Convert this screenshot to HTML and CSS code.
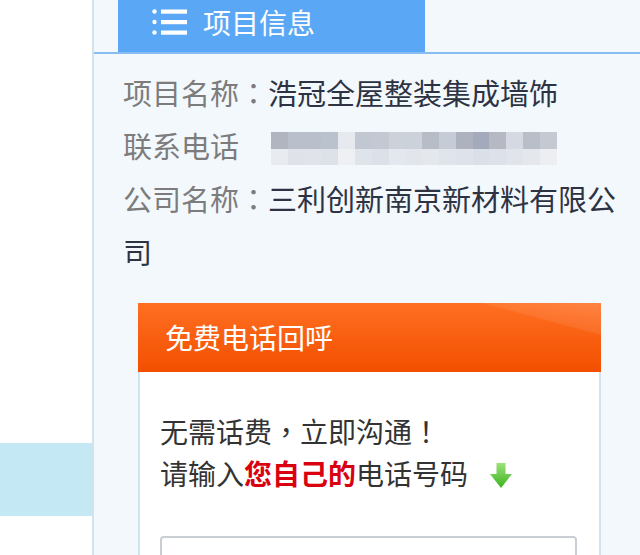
FILE: index.html
```html
<!DOCTYPE html>
<html lang="zh-CN">
<head>
  <meta charset="UTF-8">
  <title>项目信息</title>
  <link rel="stylesheet" href="styles.css">
</head>
<body>

  <div class="page">
    <div class="side">
      <div class="side-item"></div>
    </div>

    <div class="panel">
      <div class="tab-bar">
        <div class="tab">
          <svg class="tab-icon" width="35" height="28" viewBox="0 0 35 28">
            <circle cx="2.5" cy="3.5" r="2.2" fill="#fff"/>
            <circle cx="2.5" cy="14" r="2.2" fill="#fff"/>
            <circle cx="2.5" cy="24.5" r="2.2" fill="#fff"/>
            <rect x="9" y="1.5" width="26" height="4.2" fill="#fff"/>
            <rect x="9" y="12" width="26" height="4.2" fill="#fff"/>
            <rect x="9" y="22.5" width="26" height="4.2" fill="#fff"/>
          </svg>
          <span>项目信息</span>
        </div>
      </div>

      <div class="info">
        <p><span class="label">项目名称</span><span class="label punct" lang="zh-TW">：</span>浩冠全屋整装集成墙饰</p>
        <p class="phone-row">
          <span class="label">联系电话</span>
          <span class="masked">
            <i style="background:#b0b5bf"></i><i style="background:#b9c0cb"></i><i style="background:#b9c0cb"></i><i style="background:#bac2ce"></i><i style="background:#e6e9ee"></i><i style="background:#c2c8d2"></i><i style="background:#c4c8d2"></i><i style="background:#ccd1da"></i><i style="background:#ccd2da"></i><i style="background:#b8bcc6"></i><i style="background:#c6ccd6"></i><i style="background:#aeb2bf"></i><i style="background:#a2aabb"></i><i style="background:#b6b9c4"></i><i style="background:#d5d9e2"></i><i style="background:#b9bec9"></i><i style="background:#c5c9d2"></i>
            <i style="background:#e8ebef"></i><i style="background:#dfe3e9"></i><i style="background:#e0e4ea"></i><i style="background:#dde1e8"></i><i style="background:#eef0f3"></i><i style="background:#dfe3ea"></i><i style="background:#dce1e9"></i><i style="background:#e3e7ee"></i><i style="background:#e2e6ec"></i><i style="background:#e4e8ed"></i><i style="background:#e0e4eb"></i><i style="background:#dee2ea"></i><i style="background:#dbe0e8"></i><i style="background:#dde1e9"></i><i style="background:#e1e5eb"></i><i style="background:#e4e7ec"></i><i style="background:#eceef2"></i>
          </span>
        </p>
        <p><span class="label">公司名称</span><span class="label punct" lang="zh-TW">：</span>三利创新南京新材料有限公司</p>
      </div>

      <div class="callback">
        <div class="callback-head">免费电话回呼</div>
        <div class="callback-body">
          <p>无需话费<span class="punct" lang="zh-TW">，</span>立即沟通<span class="punct" lang="zh-TW">！</span></p>
          <p>请输入<b class="hl">您自己的</b>电话号码
            <svg class="arrow" width="22" height="25" viewBox="0 0 22 25">
              <defs>
                <linearGradient id="g" x1="0" y1="0" x2="0" y2="1">
                  <stop offset="0" stop-color="#9be27a"/>
                  <stop offset="1" stop-color="#3cb21c"/>
                </linearGradient>
              </defs>
              <path d="M6.5 0 H15.5 V11 H22 L11 25 L0 11 H6.5 Z" fill="url(#g)"/>
            </svg>
          </p>
          <input class="tel" type="text">
        </div>
      </div>
    </div>
  </div>

</body>
</html>
```

FILE: styles.css
```css
body {
  margin: 0;
  background: #fff;
  font-family: "Noto Sans CJK SC", "Microsoft YaHei", sans-serif;
  color: #333;
  overflow: hidden;
}

.page {
  display: flex;
  height: 555px;
}

.side {
  width: 92px;
  flex: none;
  padding-top: 443px;
}

.side-item {
  height: 73px;
  background: #c5e8f5;
}

.panel {
  flex: 1;
  background: #f3f8fc;
  border-left: 2px solid #d3e3ee;
  overflow: hidden;
}

.tab-bar {
  height: 52px;
  border-bottom: 2px solid #86bdf2;
  padding-left: 24px;
}

.tab {
  width: 307px;
  height: 52px;
  background: #5aa8f5;
  color: #fff;
  font-size: 28px;
  display: flex;
  align-items: center;
  box-sizing: border-box;
  padding-left: 34px;
  padding-bottom: 8px;
}

.tab-icon {
  margin-right: 16px;
}

.info {
  padding: 12px 10px 0 29px;
  font-size: 29px;
  line-height: 53px;
  color: #2e3344;
}

.info p {
  margin: 0;
}

.label {
  color: #7c7c7c;
}

.punct {
  font-family: "Noto Sans CJK TC", sans-serif;
}

.phone-row {
  display: flex;
  align-items: center;
}

.masked {
  margin-left: 32px;
  width: 286px;
  display: flex;
  flex-wrap: wrap;
  position: relative;
  top: 3px;
}

.masked i {
  width: 16.8px;
  height: 16.5px;
}

.callback {
  margin: 25px 0 0 44px;
  width: 463px;
}

.callback-head {
  height: 69px;
  line-height: 69px;
  padding-left: 27px;
  padding-bottom: 2px;
  box-sizing: border-box;
  color: #fff;
  font-size: 28px;
  background:
    linear-gradient(195deg, rgba(255,255,255,0.14) 0, rgba(255,255,255,0.08) 16%, rgba(255,255,255,0) 17%),
    linear-gradient(to bottom, #ff6f22, #f24f00);
}

.callback-body {
  background: #fff;
  border: 2px solid #d3e3ee;
  border-top: none;
  padding: 38px 20px 0 20px;
  height: 200px;
  font-size: 28px;
  line-height: 42px;
}

.callback-body p {
  margin: 0;
}

.hl {
  color: #d9000f;
}

.arrow {
  margin-left: 16px;
  vertical-align: -3px;
}

.tel {
  display: block;
  margin-top: 42px;
  width: 417px;
  height: 44px;
  box-sizing: border-box;
  border: 2px solid #c9ced5;
  border-radius: 4px;
  background: #fff;
}
```
